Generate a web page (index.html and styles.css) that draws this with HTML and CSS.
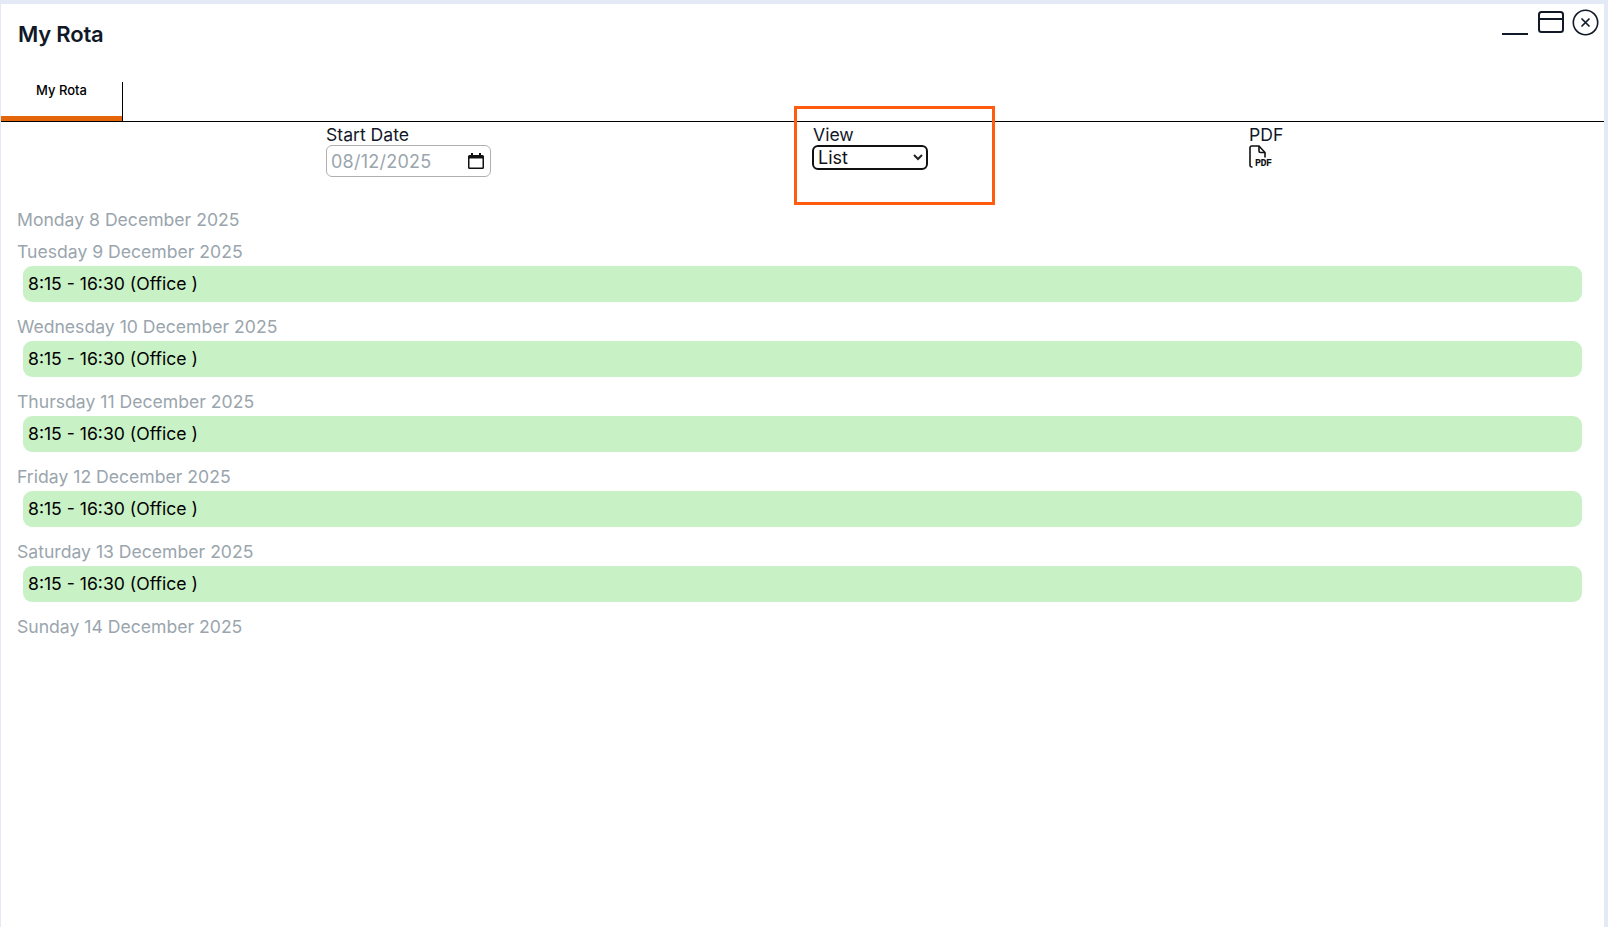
FILE: index.html
```html
<!DOCTYPE html>
<html lang="en">
<head>
<meta charset="utf-8">
<title>My Rota</title>
<link rel="stylesheet" href="styles.css">
</head>
<body>
<div class="panel">
  <header class="titlebar">
    <h1 class="title">My Rota</h1>
    <div class="window-controls">
      <span class="minimise"></span>
      <svg class="icon-max" width="26" height="22" viewBox="0 0 26 22" fill="none" stroke="#111827" stroke-width="2"><rect x="1" y="1" width="24" height="20" rx="2.500"/><path d="M1 8h24"/></svg>
      <svg class="icon-close" width="27" height="27" viewBox="0 0 27 27" fill="none" stroke="#111827"><circle cx="13.500" cy="13.500" r="12.200" stroke-width="1.600"/><path d="M10 10l7 7M17 10l-7 7" stroke-width="1.700" stroke-linecap="round"/></svg>
    </div>
  </header>
  <nav class="tabs"><div class="tab">My Rota</div></nav>
  <section class="filters">
    <div class="filter filter-date">
      <label class="filter-label">Start Date</label>
      <div class="date-input"><span class="date-value">08/12/2025</span>
        <svg width="16" height="16" viewBox="0 0 16 16"><path fill="#111" d="M3 0h2v2h6V0h2v2h1.500A1.500 1.500 0 0 1 16 3.500v11a1.500 1.500 0 0 1-1.500 1.500h-13A1.500 1.500 0 0 1 0 14.500v-11A1.500 1.500 0 0 1 1.500 2H3zM1.500 5.500v9h13v-9z"/></svg>
      </div>
    </div>
    <div class="filter filter-view">
      <label class="filter-label view-label">View</label>
      <div class="select"><span>List</span>
        <svg width="10" height="7" viewBox="0 0 10 7" fill="none" stroke="#222" stroke-width="2"><path d="M1 1l4 4 4-4"/></svg>
      </div>
    </div>
    <div class="filter filter-pdf">
      <label class="filter-label">PDF</label>
      <div class="pdf-icon">
        <svg width="17" height="23" viewBox="0 0 17 23" fill="none" stroke="#111" stroke-width="1.600"><path d="M3.500 22H2.800A1.800 1.800 0 0 1 1 20.200V2.800A1.800 1.800 0 0 1 2.800 1H10l6 6.500v5"/><path d="M10 1v5a1.500 1.500 0 0 0 1.500 1.500H16"/></svg>
        <span class="pdf-text">PDF</span>
      </div>
    </div>
  </section>
  <div class="highlight"></div>
  <main class="days">
    <div class="day"><div class="day-label">Monday 8 December 2025</div></div>
    <div class="day"><div class="day-label">Tuesday 9 December 2025</div><div class="shift">8:15 - 16:30 (Office )</div></div>
    <div class="day"><div class="day-label">Wednesday 10 December 2025</div><div class="shift">8:15 - 16:30 (Office )</div></div>
    <div class="day"><div class="day-label">Thursday 11 December 2025</div><div class="shift">8:15 - 16:30 (Office )</div></div>
    <div class="day"><div class="day-label">Friday 12 December 2025</div><div class="shift">8:15 - 16:30 (Office )</div></div>
    <div class="day"><div class="day-label">Saturday 13 December 2025</div><div class="shift">8:15 - 16:30 (Office )</div></div>
    <div class="day"><div class="day-label">Sunday 14 December 2025</div></div>
  </main>
</div>
</body>
</html>
```
FILE: styles.css
```css
* { box-sizing: border-box; }
html, body { height: 100%; }
body {
  margin: 0;
  padding: 4px 4px 0 1px;
  background: #e4e9f6;
  font-family: Inter, "Liberation Sans", sans-serif;
  color: #111827;
  overflow: hidden;
}
.panel {
  position: relative;
  height: 100%;
  background: #fff;
}
.titlebar {
  height: 78px;
  display: flex;
  justify-content: space-between;
  align-items: flex-start;
}
.title {
  margin: 16px 0 0 17px;
  font-size: 22px;
  line-height: 28px;
  font-weight: 600;
  letter-spacing: -0.2px;
}
.window-controls {
  display: flex;
  align-items: flex-start;
  gap: 9px;
  padding: 6px 5px 0 0;
}
.minimise {
  width: 26px;
  height: 2px;
  margin-top: 23px;
  background: #111827;
}
.icon-max { margin: 1px -1px 0 1px; }
.icon-close { margin-top: -1px; }
.tabs {
  height: 40px;
  border-bottom: 1px solid #000;
}
.tab {
  width: 122px;
  height: 39px;
  border-right: 1px solid #000;
  box-shadow: inset 0 -5px 0 #e4650a;
  font-size: 13px;
  font-weight: 500;
  line-height: 17px;
  text-align: center;
  color: #000;
}
.filters {
  display: flex;
  height: 62px;
  padding-left: 325px;
}
.filter { display: flex; flex-direction: column; }
.filter-date { width: 486px; }
.filter-view { width: 437px; }
.filter-label {
  font-size: 17.6px;
  line-height: 20px;
  margin-top: 3px;
  color: #111827;
}
.view-label { margin-left: 1px; }
.date-input {
  width: 165px;
  height: 32px;
  border: 1px solid #b0b0b0;
  border-radius: 6px;
  display: flex;
  align-items: center;
  justify-content: space-between;
  padding: 0 6px 0 4px;
}
.date-value { font-size: 18px; color: #9aa5ad; letter-spacing: 0.25px; }
.select {
  width: 116px;
  height: 25px;
  border: 2px solid #111;
  border-radius: 6px;
  display: flex;
  align-items: center;
  justify-content: space-between;
  padding: 0 3px 0 4px;
  font-size: 18px;
  color: #111;
}
.pdf-icon {
  display: flex;
  align-items: flex-end;
  height: 23px;
}
.pdf-text {
  font-family: "Liberation Mono", monospace;
  font-size: 10px;
  font-weight: 700;
  line-height: 8px;
  letter-spacing: -0.5px;
  margin-left: -11px;
  background: #fff;
  padding: 0;
  color: #111;
}
.highlight {
  position: absolute;
  left: 793px;
  top: 102px;
  width: 201px;
  height: 99px;
  border: 3px solid #ff5c0f;
}
.days {
  padding: 24px 22px 0 16px;
}
.day-label {
  font-size: 17.6px;
  line-height: 24px;
  color: #9aa5ad;
  margin-bottom: 8px;
}
.shift {
  margin: -6px 0 13px 6px;
  height: 36px;
  background: #c9f1c6;
  border-radius: 9px;
  padding-left: 5px;
  font-size: 17.6px;
  line-height: 35px;
  color: #000;
}
```
